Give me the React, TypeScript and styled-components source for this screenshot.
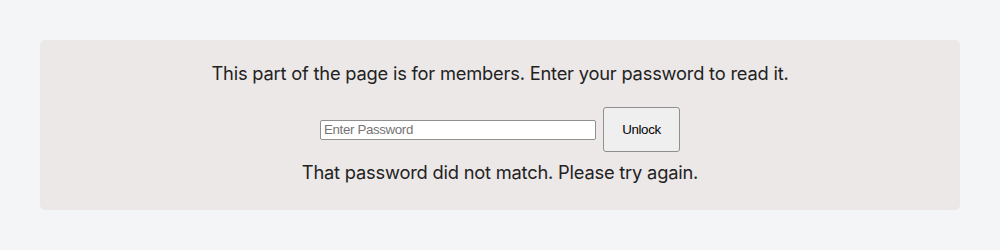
import React from "react";
import styled, { createGlobalStyle } from "styled-components";

const Global = createGlobalStyle`
  html, body { margin: 0; padding: 0; background: #f4f5f7; }
  body { font-family: Inter, "Noto Sans", sans-serif; }
`;

const Page = styled.div`
  padding: 40px;
`;

const Card = styled.section`
  background: #ece8e7;
  border-radius: 5px;
  height: 170px;
  box-sizing: border-box;
  padding-top: 21px;
  display: flex;
  flex-direction: column;
  align-items: center;
`;

const Message = styled.p<{ $top?: number }>`
  margin: ${(p) => p.$top ?? 0}px 0 0;
  font-family: Inter, "Noto Sans", sans-serif;
  font-size: 18.3px;
  font-weight: 400;
  line-height: 24px;
  color: #222;
  letter-spacing: -0.2px;
`;

const Form = styled.form`
  display: flex;
  align-items: center;
  gap: 7px;
  margin-top: 22px;
`;

const Input = styled.input`
  width: 276px;
  height: 20px;
  box-sizing: border-box;
  border: 1px solid #8f8f8f;
  border-radius: 2px;
  padding: 0 3px;
  font-family: "Liberation Sans", Arial, sans-serif;
  font-size: 13.3px;
  letter-spacing: -0.35px;
  background: #fff;
  &::placeholder { color: #757575; }
`;

const Button = styled.button`
  width: 77px;
  height: 45px;
  box-sizing: border-box;
  border: 1px solid #8f8f8f;
  border-radius: 3px;
  background: #efefef;
  font-family: "Liberation Sans", Arial, sans-serif;
  font-size: 13.3px;
  letter-spacing: -0.35px;
  color: #000;
`;

export default function App() {
  return (
    <>
      <Global />
      <Page>
        <Card>
          <Message>This part of the page is for members. Enter your password to read it.</Message>
          <Form onSubmit={(e) => e.preventDefault()}>
            <Input type="password" placeholder="Enter Password" />
            <Button type="submit">Unlock</Button>
          </Form>
          <Message $top={8}>That password did not match. Please try again.</Message>
        </Card>
      </Page>
    </>
  );
}
